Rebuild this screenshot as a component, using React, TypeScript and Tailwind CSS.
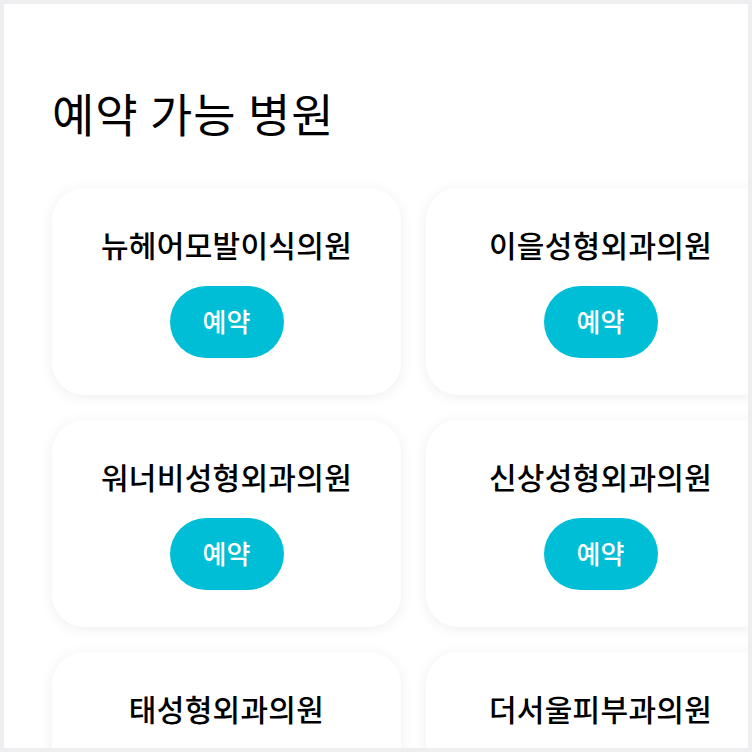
import React from 'react';

const hospitals = [
  '뉴헤어모발이식의원',
  '이을성형외과의원',
  '워너비성형외과의원',
  '신상성형외과의원',
  '태성형외과의원',
  '더서울피부과의원',
];

const HospitalCard: React.FC<{ name: string }> = ({ name }) => (
  <div className="flex h-[207px] w-[349px] flex-col items-center rounded-[32px] bg-white pt-[38px] shadow-[0_2px_14px_rgba(0,0,0,0.07)]">
    <p className="text-[30px] leading-[36px] font-medium tracking-[0.3px] text-black">{name}</p>
    <button className="mt-6 flex h-[72px] w-[114px] items-center justify-center rounded-full bg-[#00bed6] pb-1 text-[26px] font-medium text-white">
      예약
    </button>
  </div>
);

export default function App() {
  return (
    <div className="h-[752px] w-[752px] bg-[#eeeef0] p-1 font-['Noto_Sans_CJK_KR',sans-serif]">
      <div className="h-full w-full overflow-hidden bg-white pl-12 pt-[78px]">
        <h1 className="text-[46px] leading-[60px] font-normal tracking-[1px] text-black">예약 가능 병원</h1>
        <div className="mt-[46px] grid w-max grid-cols-[349px_349px] gap-x-[25px] gap-y-[25px]">
          {hospitals.map((h) => (
            <HospitalCard key={h} name={h} />
          ))}
        </div>
      </div>
    </div>
  );
}
